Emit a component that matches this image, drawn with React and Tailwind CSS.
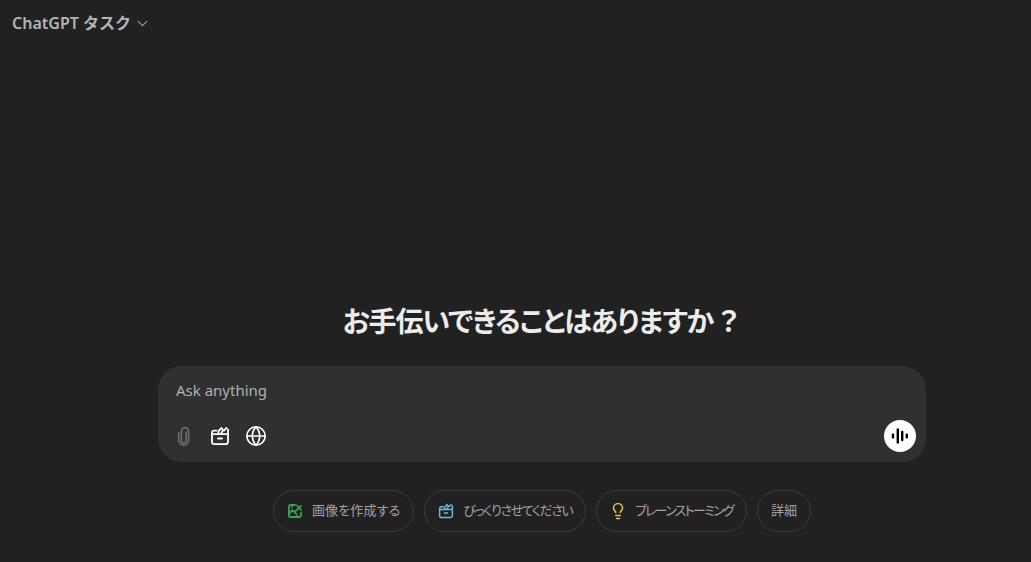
import React from 'react';
import { ChevronDown, Globe, Lightbulb } from 'lucide-react';

function ClipIcon({ size = 20, className = '' }) {
  return (
    <svg width={size} height={size} viewBox="0 0 20 20" fill="none" stroke="currentColor" strokeWidth="1.6" strokeLinecap="round" strokeLinejoin="round" className={className}>
      <path d="M12.2 6v8.4a2.4 2.4 0 0 1-4.8 0V5.2a3.6 3.6 0 0 1 7.2 0v9a4.9 4.9 0 0 1-9.8 0V7" />
    </svg>
  );
}

function BoxIcon({ size = 20, className = '' }) {
  return (
    <svg width={size} height={size} viewBox="0 0 20 20" fill="none" stroke="currentColor" strokeWidth="1.8" strokeLinecap="round" strokeLinejoin="round" className={className}>
      <path d="M2 8.2h16v7.6a2.4 2.4 0 0 1-2.4 2.4H4.4A2.4 2.4 0 0 1 2 15.8z" />
      <path d="M2 8.2V6.6a2 2 0 0 1 2-2h2.5" />
      <path d="M18 8.2V3.5" />
      <path d="M8.5 8V5l3-3 1.5 2-2 4" />
      <path d="M14 4.5l2.5-2.5" />
      <path d="M8 12.5h4" />
    </svg>
  );
}

function ImageIcon({ size = 16, className = '' }) {
  return (
    <svg width={size} height={size} viewBox="0 0 16 16" fill="none" stroke="currentColor" strokeWidth="1.8" strokeLinecap="round" strokeLinejoin="round" className={className}>
      <path d="M8 2H3.2A1.2 1.2 0 0 0 2 3.2v9.6A1.2 1.2 0 0 0 3.2 14h9.6a1.2 1.2 0 0 0 1.2-1.2V10" />
      <path d="M2 11l3.5-4 4.5 5" />
      <path d="M8.5 8 14 3" />
      <path d="M10 2.5 14 7" />
      <path d="M5 4h.1" />
    </svg>
  );
}

function Chip({ icon, label, labelClass = '' }) {
  return (
    <button className="h-[42px] flex items-center gap-[9px] px-[13px] rounded-full border border-[#3a3a3a] text-[13px] text-[#a3a3a3] whitespace-nowrap [font-feature-settings:'palt']">
      {icon}
      <span className={labelClass}>{label}</span>
    </button>
  );
}

export default function App() {
  return (
    <div className="h-screen bg-[#212121] flex flex-col overflow-hidden" style={{ fontFamily: '"Noto Sans", "Noto Sans CJK JP", sans-serif' }}>
      <header className="flex items-center gap-[3px] pl-[12px] pt-[11px]">
        <span className="text-[16px] font-semibold leading-[24px] text-[#b4b4b4]">ChatGPT タスク</span>
        <ChevronDown size={17} strokeWidth={1.6} className="text-[#a0a0a0]" />
      </header>

      <main className="flex-1 flex flex-col justify-end items-center pb-[30px] pl-[53px]">
        <h1 className="text-[28px] leading-[38px] font-semibold tracking-[-1.1px] text-[#ececec] mb-[26px] -ml-[4px] [font-feature-settings:'palt']">
          お手伝いできることはありますか<span className="ml-[6px]">？</span>
        </h1>

        <div className="w-[768px] h-[96px] rounded-[24px] bg-[#303030] flex flex-col justify-between pl-[16px] pr-[10px] pt-[12px] pb-[10px]">
          <div className="pl-[2px] text-[15px] leading-[24px] text-[#b0b0b0]">Ask anything</div>
          <div className="flex items-center justify-between">
            <div className="flex items-center gap-[16px]">
              <ClipIcon size={20} className="text-[#6e6e6e]" />
              <BoxIcon size={20} className="text-white" />
              <Globe size={22} strokeWidth={1.8} className="text-white -m-[1px]" />
            </div>
            <div className="w-[32px] h-[32px] rounded-full bg-white flex items-center justify-center">
              <svg width="20" height="20" viewBox="0 0 20 20" fill="none" stroke="black" strokeLinecap="round" strokeWidth="2.4">
                <path d="M3 8.6v2.8" />
                <path d="M7.8 3.5v13" />
                <path d="M12.2 6v8" />
                <path d="M16.8 8.8v2.4" />
              </svg>
            </div>
          </div>
        </div>

        <div className="flex items-center gap-[10px] mt-[28px]">
          <Chip icon={<ImageIcon size={16} className="text-[#3fa24a]" />} label="画像を作成する" labelClass="tracking-[0.15px]" />
          <Chip icon={<BoxIcon size={16} className="text-[#63bfdc]" />} label="びっくりさせてください" labelClass="tracking-[-1.4px]" />
          <Chip icon={<Lightbulb size={18} strokeWidth={2} className="text-[#e3c23d] -m-[1px]" />} label="ブレーンストーミング" labelClass="tracking-[-1.7px]" />
          <Chip label="詳細" />
        </div>
      </main>
    </div>
  );
}
